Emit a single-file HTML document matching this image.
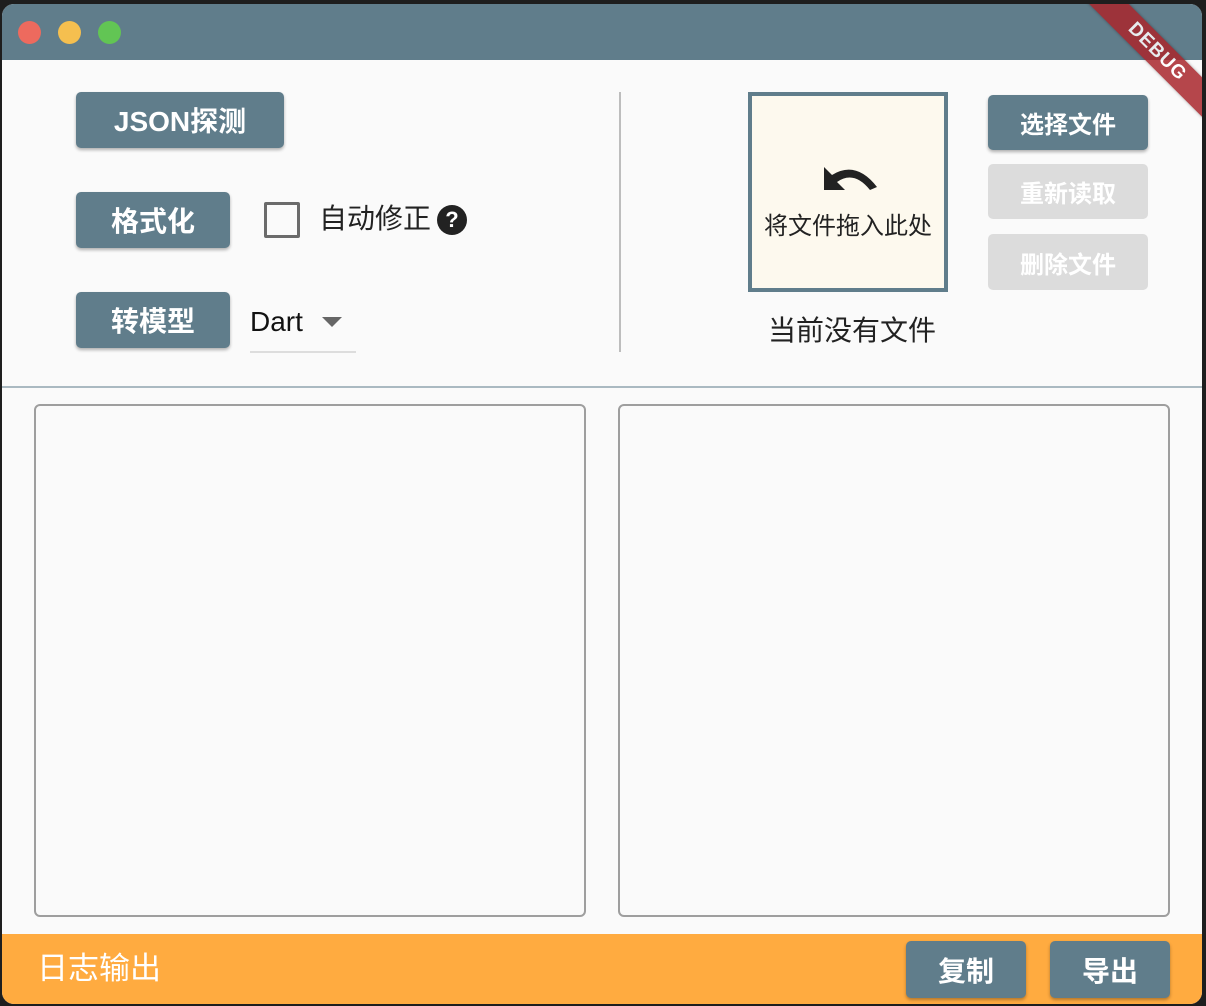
<!DOCTYPE html>
<html><head><meta charset="utf-8"><style>
*{margin:0;padding:0;box-sizing:border-box}
body{width:1206px;height:1006px;background:#1e1e1e;position:relative;overflow:hidden;font-family:"Liberation Sans","Noto Sans CJK SC",sans-serif}
.win{position:absolute;left:2px;top:4px;width:1200px;height:1000px;border-radius:12px;overflow:hidden;background:#fafafa}
.title{position:absolute;left:0;top:0;width:1200px;height:56px;background:#607d8b}
.dot{position:absolute;top:17px;width:23px;height:23px;border-radius:50%}
.a{position:absolute}
.btn{position:absolute;background:#607d8b;color:#fff;border-radius:5px;font-weight:bold;font-size:28px;display:flex;align-items:center;justify-content:center;box-shadow:0 2px 3px rgba(0,0,0,.3)}
.dis{background:#dcdcdc;box-shadow:none}
.ta{position:absolute;border:2px solid #9e9e9e;border-radius:6px;background:#fafafa}
</style></head><body>
<div class="win">
<div class="title">
<div class="dot" style="left:16px;background:#ed6a5e"></div>
<div class="dot" style="left:56px;background:#f5bf4f"></div>
<div class="dot" style="left:96px;background:#62c554"></div>
</div>
<div class="btn" style="left:74px;top:88px;width:208px;height:56px">JSON探测</div>
<div class="btn" style="left:74px;top:188px;width:154px;height:56px">格式化</div>
<div class="btn" style="left:74px;top:288px;width:154px;height:56px">转模型</div>
<div class="a" style="left:262px;top:198px;width:36px;height:36px;border:3px solid #6b6b6b;border-radius:2px"></div>
<div class="a" style="left:317px;top:197px;font-size:28px;color:#222;line-height:36px">自动修正</div>
<div class="a" style="left:435px;top:201px;width:30px;height:30px;border-radius:50%;background:#222;color:#fff;font-weight:bold;font-size:22px;text-align:center;line-height:30px">?</div>
<div class="a" style="left:248px;top:300px;font-size:28px;color:#111;line-height:36px">Dart</div>
<div class="a" style="left:320px;top:313px;width:0;height:0;border-left:10px solid transparent;border-right:10px solid transparent;border-top:10px solid #666"></div>
<div class="a" style="left:248px;top:347px;width:106px;height:2px;background:#ddd"></div>
<div class="a" style="left:617px;top:88px;width:2px;height:260px;background:#bdbdbd"></div>
<div class="a" style="left:746px;top:88px;width:200px;height:200px;border:4px solid #607d8b;background:#fdf9ee"></div>
<svg class="a" style="left:820px;top:156px" width="56" height="32" viewBox="0 0 56 32"><path d="M2 7 L2 30 L23 30 L15 22 Q32 10 48 30 L55 27 Q34 0 10 15 Z" fill="#222"/></svg>
<div class="a" style="left:746px;top:202px;width:200px;text-align:center;font-size:24px;color:#222">将文件拖入此处</div>
<div class="a" style="left:746px;top:305px;width:208px;text-align:center;font-size:28px;color:#222">当前没有文件</div>
<div class="btn" style="left:986px;top:91px;width:160px;height:55px;font-size:24px">选择文件</div>
<div class="btn dis" style="left:986px;top:160px;width:160px;height:55px;font-size:24px">重新读取</div>
<div class="btn dis" style="left:986px;top:230px;width:160px;height:56px;font-size:24px">删除文件</div>
<div class="a" style="left:0;top:382px;width:1200px;height:2px;background:#aab9c1"></div>
<div class="ta" style="left:32px;top:400px;width:552px;height:513px"></div>
<div class="ta" style="left:616px;top:400px;width:552px;height:513px"></div>
<div class="a" style="left:0;top:930px;width:1200px;height:70px;background:#ffab40"></div>
<div class="a" style="left:35px;top:945px;font-size:31px;color:#fff;line-height:40px">日志输出</div>
<div class="btn" style="left:904px;top:937px;width:120px;height:57px">复制</div>
<div class="btn" style="left:1048px;top:937px;width:120px;height:57px">导出</div>
<div class="a" style="left:1060px;top:34px;width:190px;height:28px;background:#a8262c;transform:rotate(45deg);color:#fff;font-weight:bold;font-size:19px;text-align:center;line-height:28px;box-shadow:0 0 3px rgba(0,0,0,.4);letter-spacing:1px;opacity:.85">DEBUG</div>
</div>
</body></html>
